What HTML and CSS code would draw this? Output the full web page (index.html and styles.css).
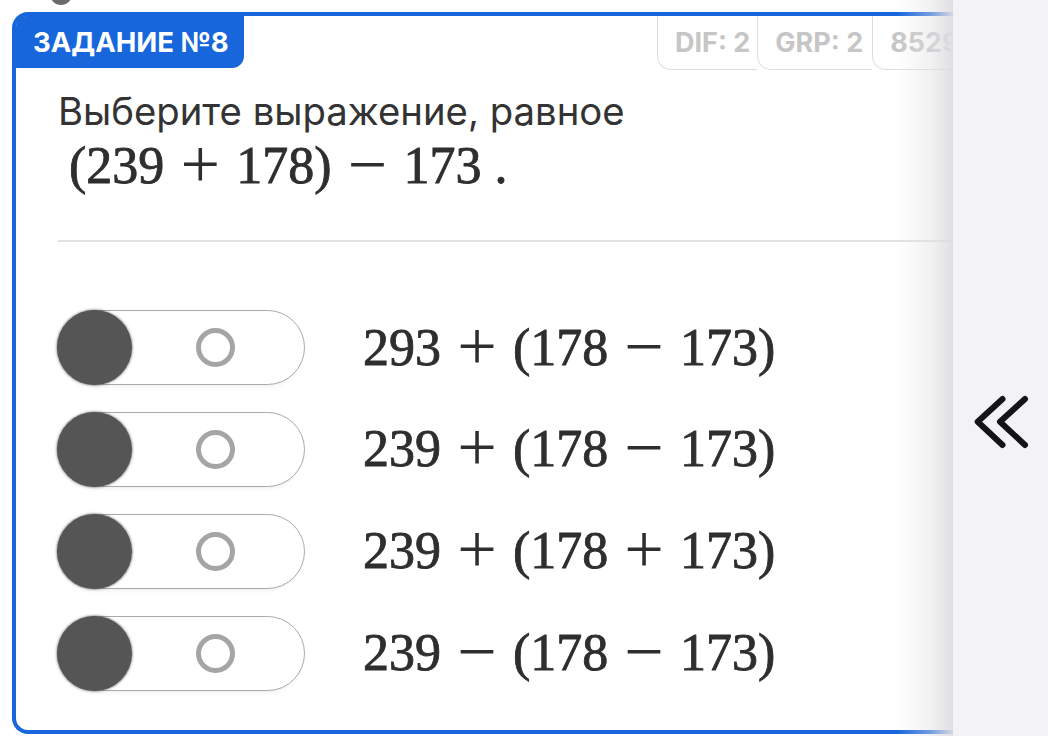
FILE: index.html
```html
<!DOCTYPE html>
<html lang="ru">
<head>
<meta charset="utf-8">
<title>Задание №8</title>
<link rel="stylesheet" href="styles.css">
</head>
<body>
<div class="layout">
  <main class="main">
    <div class="peek"><span class="peek-dot"></span></div>
    <section class="card">
      <header class="card-head">
        <div class="badge">ЗАДАНИЕ №8</div>
        <div class="tags">
          <span class="tag">DIF: 2</span>
          <span class="tag">GRP: 2</span>
          <span class="tag">85291</span>
        </div>
      </header>
      <div class="question">
        <p class="q-text">Выберите выражение, равное</p>
        <p class="q-math">(239<span class="op">+</span>178)<span class="op">−</span>173<span class="dot">.</span></p>
      </div>
      <hr class="divider">
      <ul class="options">
        <li class="option">
          <span class="toggle"><span class="knob"></span><span class="ring"></span></span>
          <span class="opt-math">293<span class="op">+</span>(178<span class="op">−</span>173)</span>
        </li>
        <li class="option">
          <span class="toggle"><span class="knob"></span><span class="ring"></span></span>
          <span class="opt-math">239<span class="op">+</span>(178<span class="op">−</span>173)</span>
        </li>
        <li class="option">
          <span class="toggle"><span class="knob"></span><span class="ring"></span></span>
          <span class="opt-math">239<span class="op">+</span>(178<span class="op">+</span>173)</span>
        </li>
        <li class="option">
          <span class="toggle"><span class="knob"></span><span class="ring"></span></span>
          <span class="opt-math">239<span class="op">−</span>(178<span class="op">−</span>173)</span>
        </li>
      </ul>
    </section>
  </main>
  <aside class="side">
    <div class="side-shade"></div>
    <button class="collapse" type="button" aria-label="Свернуть">
      <svg width="58" height="58" viewBox="0 0 58 58" fill="none" stroke="#141414" stroke-width="6" stroke-linecap="round" stroke-linejoin="round">
        <path d="M30.5 5 L5.7 27.7 L30.5 51"/>
        <path d="M53 5 L28 27.7 L53 51"/>
      </svg>
    </button>
  </aside>
</div>
</body>
</html>
```
FILE: styles.css
```css
* { box-sizing: border-box; }
html, body {
  margin: 0;
  padding: 0;
  background: #ffffff;
  font-family: Inter, Roboto, "Noto Sans", sans-serif;
  color: #333333;
}
.layout {
  display: flex;
  width: 1048px;
  height: 736px;
  overflow: hidden;
}
.main {
  flex: 1 1 auto;
  min-width: 0;
  overflow: hidden;
}
.peek {
  display: flex;
  align-items: flex-start;
  height: 5px;
  padding-left: 50px;
  overflow: hidden;
}
.peek-dot {
  display: block;
  flex: 0 0 auto;
  width: 22px;
  height: 22px;
  margin-top: -17px;
  border-radius: 50%;
  background: #6b6b6b;
}
.card {
  margin: 7px 0 0 12px;
  width: 1040px;
  height: 722px;
  border: 4px solid #1766db;
  border-right: none;
  border-radius: 16px 0 0 16px;
  background: #ffffff;
}
.card-head {
  display: flex;
  align-items: flex-start;
}
.badge {
  width: 228px;
  height: 52px;
  background: #1766db;
  color: #ffffff;
  font-weight: 700;
  font-size: 27.5px;
  display: flex;
  align-items: center;
  padding-left: 17px;
  border-radius: 10px 0 12px 0;
}
.tags {
  display: flex;
  margin-left: 413px;
}
.tag {
  height: 54px;
  display: flex;
  align-items: center;
  padding: 0 7px 0 17px;
  border: 1px solid #dedede;
  border-top: none;
  border-right: none;
  border-radius: 0 0 0 14px;
  color: #c6c6c6;
  font-weight: 700;
  font-size: 27px;
}
.tag:nth-child(2) { padding-right: 9px; }
.question {
  padding: 18px 0 0 42px;
}
.q-text {
  margin: 0;
  font-size: 38.3px;
  line-height: 46px;
  color: #333333;
}
.q-math {
  margin: 2px 0 0 0;
  padding-left: 11px;
  font-family: "Liberation Serif", "Times New Roman", serif;
  font-size: 52px;
  line-height: 60px;
  color: #2e2e2e;
  -webkit-text-stroke: 0.85px #2e2e2e;
  white-space: nowrap;
}
.op {
  margin: 0 0.23em;
  font-size: 1.35em;
  line-height: 0.8;
  vertical-align: -0.065em;
  -webkit-text-stroke: 0;
}
.dot { margin-left: 0.25em; }
.divider {
  margin: 44px 0 0 42px;
  border: none;
  height: 2px;
  background: #e2e2e2;
}
.options {
  list-style: none;
  margin: 0;
  padding: 68px 0 0 41px;
  display: flex;
  flex-direction: column;
  gap: 26.7px;
}
.option {
  display: flex;
  align-items: center;
  height: 75px;
}
.toggle {
  flex: 0 0 auto;
  width: 248px;
  height: 75px;
  border: 1.5px solid #a9a9a9;
  border-radius: 38px;
  background: #ffffff;
  box-shadow: 0 6px 5px -5px rgba(0,0,0,0.08);
  display: flex;
  align-items: center;
}
.knob {
  width: 75px;
  height: 75px;
  margin-left: -1.5px;
  border-radius: 50%;
  background: #555555;
  box-shadow: 0 0 2px 1px rgba(85,85,85,0.5);
}
.ring {
  width: 39px;
  height: 39px;
  margin-left: 64px;
  border-radius: 50%;
  border: 5.5px solid #a5a5a5;
}
.opt-math {
  margin-left: 58px;
  font-family: "Liberation Serif", "Times New Roman", serif;
  font-size: 52px;
  line-height: 60px;
  color: #2e2e2e;
  -webkit-text-stroke: 0.85px #2e2e2e;
  white-space: nowrap;
}
.side {
  position: relative;
  flex: 0 0 95px;
  background: #f2f2f7;
  display: flex;
  align-items: flex-start;
  justify-content: flex-start;
  padding: 394px 0 0 19px;
}
.side-shade {
  position: absolute;
  top: 0;
  bottom: 0;
  left: -56px;
  width: 56px;
  background: linear-gradient(to right, rgba(225,225,228,0) 0%, rgba(225,225,228,0.45) 60%, rgba(222,222,225,0.95) 100%);
  pointer-events: none;
}
.collapse {
  border: none;
  background: none;
  padding: 0;
  margin: 0;
  display: block;
}
.collapse svg { display: block; }
```
